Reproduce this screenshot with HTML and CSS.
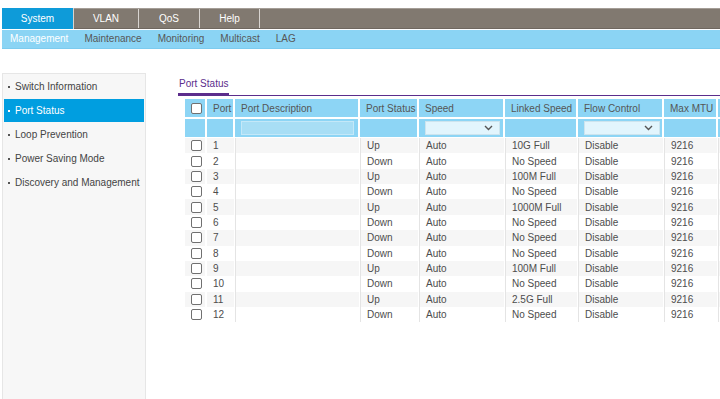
FILE: index.html
```html
<!DOCTYPE html>
<html lang="en">
<head>
  <meta charset="utf-8">
  <title>Port Status</title>
  <link rel="stylesheet" href="styles.css">
</head>
<body>
  <!-- Top menu -->
  <div class="top-nav">
    <div class="top-tab active">System</div>
    <div class="top-tab">VLAN</div>
    <div class="top-tab">QoS</div>
    <div class="top-tab">Help</div>
  </div>
  <div class="sub-nav">
    <span class="sub-item active">Management</span>
    <span class="sub-item">Maintenance</span>
    <span class="sub-item">Monitoring</span>
    <span class="sub-item">Multicast</span>
    <span class="sub-item">LAG</span>
  </div>

  <div class="main">
    <!-- Left menu -->
    <div class="side-menu">
      <div class="side-item">Switch Information</div>
      <div class="side-item selected">Port Status</div>
      <div class="side-item">Loop Prevention</div>
      <div class="side-item">Power Saving Mode</div>
      <div class="side-item">Discovery and Management</div>
    </div>

    <div class="content">
      <div class="page-tabs">
        <span class="page-tab">Port Status</span>
      </div>

      <table class="port-table">
        <thead>
          <tr class="head-row">
            <th class="c-check"><input type="checkbox" class="cb"></th>
            <th class="c-port">Port</th>
            <th class="c-desc">Port Description</th>
            <th class="c-status">Port Status</th>
            <th class="c-speed">Speed</th>
            <th class="c-linked">Linked Speed</th>
            <th class="c-flow">Flow Control</th>
            <th class="c-mtu">Max MTU</th>
            <th class="c-extra"></th>
          </tr>
          <tr class="filter-row">
            <th></th>
            <th></th>
            <th><input type="text" class="filter-input"></th>
            <th></th>
            <th>
              <div class="filter-select speed-select">
                <svg width="9" height="6" viewBox="0 0 9 6"><path d="M1 1 L4.5 4.5 L8 1" fill="none" stroke="#555" stroke-width="1.4"/></svg>
              </div>
            </th>
            <th></th>
            <th>
              <div class="filter-select flow-select">
                <svg width="9" height="6" viewBox="0 0 9 6"><path d="M1 1 L4.5 4.5 L8 1" fill="none" stroke="#555" stroke-width="1.4"/></svg>
              </div>
            </th>
            <th></th>
            <th></th>
          </tr>
        </thead>
        <tbody>
          <tr><td><input type="checkbox" class="cb"></td><td>1</td><td></td><td>Up</td><td>Auto</td><td>10G Full</td><td>Disable</td><td>9216</td><td></td></tr>
          <tr><td><input type="checkbox" class="cb"></td><td>2</td><td></td><td>Down</td><td>Auto</td><td>No Speed</td><td>Disable</td><td>9216</td><td></td></tr>
          <tr><td><input type="checkbox" class="cb"></td><td>3</td><td></td><td>Up</td><td>Auto</td><td>100M Full</td><td>Disable</td><td>9216</td><td></td></tr>
          <tr><td><input type="checkbox" class="cb"></td><td>4</td><td></td><td>Down</td><td>Auto</td><td>No Speed</td><td>Disable</td><td>9216</td><td></td></tr>
          <tr><td><input type="checkbox" class="cb"></td><td>5</td><td></td><td>Up</td><td>Auto</td><td>1000M Full</td><td>Disable</td><td>9216</td><td></td></tr>
          <tr><td><input type="checkbox" class="cb"></td><td>6</td><td></td><td>Down</td><td>Auto</td><td>No Speed</td><td>Disable</td><td>9216</td><td></td></tr>
          <tr><td><input type="checkbox" class="cb"></td><td>7</td><td></td><td>Down</td><td>Auto</td><td>No Speed</td><td>Disable</td><td>9216</td><td></td></tr>
          <tr><td><input type="checkbox" class="cb"></td><td>8</td><td></td><td>Down</td><td>Auto</td><td>No Speed</td><td>Disable</td><td>9216</td><td></td></tr>
          <tr><td><input type="checkbox" class="cb"></td><td>9</td><td></td><td>Up</td><td>Auto</td><td>100M Full</td><td>Disable</td><td>9216</td><td></td></tr>
          <tr><td><input type="checkbox" class="cb"></td><td>10</td><td></td><td>Down</td><td>Auto</td><td>No Speed</td><td>Disable</td><td>9216</td><td></td></tr>
          <tr><td><input type="checkbox" class="cb"></td><td>11</td><td></td><td>Up</td><td>Auto</td><td>2.5G Full</td><td>Disable</td><td>9216</td><td></td></tr>
          <tr><td><input type="checkbox" class="cb"></td><td>12</td><td></td><td>Down</td><td>Auto</td><td>No Speed</td><td>Disable</td><td>9216</td><td></td></tr>
        </tbody>
      </table>
    </div>
  </div>
</body>
</html>
```

FILE: styles.css
```css
html, body {
  margin: 0;
  padding: 0;
  height: 100%;
  overflow: hidden;
}

body {
  display: flex;
  flex-direction: column;
  font-family: 'Liberation Sans', Arial, sans-serif;
  font-size: 10px;
  color: #4d4d4d;
  background: #fff;
  padding-top: 8px;
  box-sizing: border-box;
}

/* Top menu */
.top-nav {
  display: flex;
  flex-shrink: 0;
  height: 21px;
  margin-left: 2px;
  background: #817970;
  border-top: 1px solid #a49d96;
  border-bottom: 1px solid #6f675f;
  box-sizing: border-box;
}

.top-tab {
  color: #fff;
  text-align: center;
  line-height: 19px;
  border-right: 1px solid #d8d4d0;
}

.top-tab:nth-child(1) { width: 71px; }
.top-tab:nth-child(2) { width: 64px; }
.top-tab:nth-child(3) { width: 60px; }
.top-tab:nth-child(4) { width: 59px; }

.top-tab.active {
  background: #0e9bd9;
  margin-top: -1px;
  margin-bottom: -1px;
  line-height: 21px;
}

.sub-nav {
  display: flex;
  flex-shrink: 0;
  margin: 1px 0 0 2px;
  height: 19px;
  background: #8bd4f4;
  border-bottom: 1px solid #7ccbef;
  box-sizing: border-box;
}

.sub-item {
  padding: 0 8px;
  line-height: 18px;
  color: #575757;
}

.sub-item.active {
  color: #fff;
}

/* Layout */
.main {
  display: flex;
  flex: 1;
  min-height: 0;
  margin-top: 24px;
}

.side-menu {
  width: 144px;
  margin-left: 2px;
  padding: 1px;
  background: #f7f7f7;
  border: 1px solid #e6e6e6;
  border-bottom: none;
  box-sizing: border-box;
  flex-shrink: 0;
}

.side-item {
  display: flex;
  align-items: center;
  gap: 5px;
  height: 23px;
  margin-bottom: 1px;
  padding-left: 4px;
  color: #444;
  white-space: nowrap;
}

.side-item:before {
  content: '';
  width: 2px;
  height: 2px;
  background: #555;
}

.side-item.selected {
  background: #009ee0;
  color: #fff;
}

.side-item.selected:before {
  background: #fff;
}

.content {
  flex: 1;
  min-width: 0;
  margin-left: 32px;
  padding-top: 5px;
}

.page-tabs {
  border-bottom: 1px solid #5c2d8c;
}

.page-tab {
  display: inline-block;
  color: #5c2d8c;
  line-height: 12px;
  padding: 0 1px 3px 1px;
  border-bottom: 2px solid #5c2d8c;
}

/* Port table */
.port-table {
  margin: 3px 0 0 7px;
  border-collapse: separate;
  border-spacing: 0;
  table-layout: fixed;
  width: 535px;
}

.port-table th,
.port-table td {
  box-sizing: border-box;
  padding: 0 0 0 6px;
  text-align: left;
  font-weight: normal;
  white-space: nowrap;
  overflow: hidden;
}

.port-table th {
  background: #8dd5f5;
  color: #555;
  border-right: 2px solid #fff;
}

.head-row th {
  border-bottom: 2px solid #fff;
  height: 20px;
}

.filter-row th {
  border-bottom: 1px solid #fff;
  height: 19px;
}

.c-check { width: 22px; }
.c-port { width: 28px; }
.c-desc { width: 125px; }
.c-status { width: 59px; }
.c-speed { width: 86px; }
.c-linked { width: 73px; }
.c-flow { width: 86px; }
.c-mtu { width: 54px; }
.c-extra { width: 2px; }

.port-table .c-extra,
.port-table tr > :last-child {
  padding: 0;
  border-right: none;
}

.port-table th:first-child,
.port-table td:first-child {
  padding: 0;
  text-align: center;
}

.port-table td {
  height: 15.36px;
  color: #4d4d4d;
  border-left: 1px solid #e4e4e4;
  border-right: 1px solid #fff;
}

.port-table td:first-child {
  border-left: none;
  border-right: 2px solid #fff;
}

.port-table td:nth-child(2) {
  border-left: none;
}

.port-table tbody tr:nth-child(odd) td {
  background: #f6f6f6;
}

.cb {
  -webkit-appearance: none;
  appearance: none;
  display: block;
  width: 11px;
  height: 11px;
  margin: 0 0 0 6px;
  border: 1px solid #707070;
  border-radius: 2px;
  background: #fff;
}

.filter-input {
  display: block;
  width: 113px;
  height: 14px;
  margin: 0;
  padding: 0;
  border: 1px solid #c4e8f8;
  background: #a8def5;
  box-sizing: border-box;
}

.filter-select {
  display: flex;
  align-items: center;
  justify-content: flex-end;
  height: 14px;
  padding-right: 6px;
  border: 1px solid #cde4ee;
  background: #e2f5fd;
  box-sizing: border-box;
}

.speed-select { width: 75px; }
.flow-select { width: 76px; }
```
